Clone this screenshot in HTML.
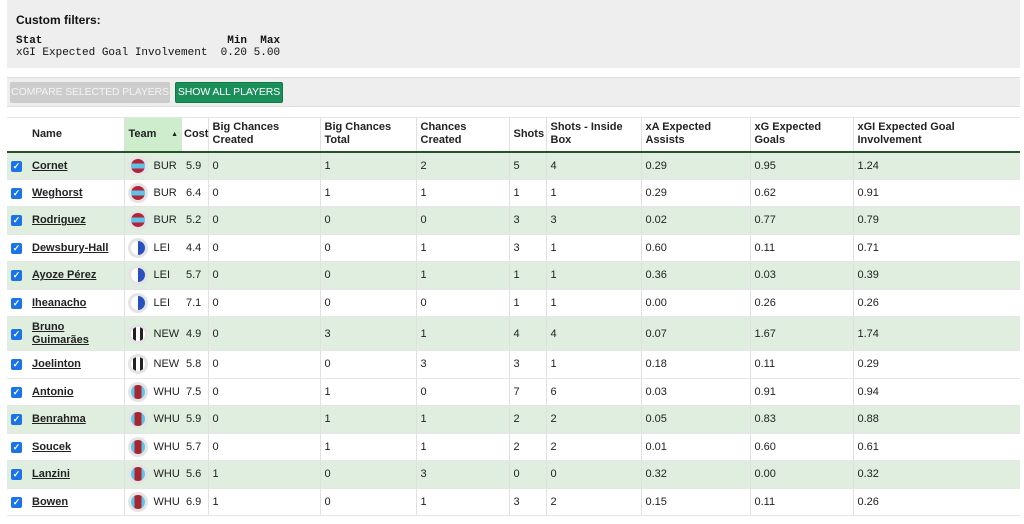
<!DOCTYPE html>
<html><head><meta charset="utf-8"><style>
*{box-sizing:border-box;margin:0;padding:0}
body{width:1024px;height:524px;background:#fff;font-family:"Liberation Sans",sans-serif;font-size:11px;color:#222;position:relative;overflow:hidden}
.top{position:absolute;left:7px;top:0;width:1013px;height:68px;background:#eee}
.top h3{position:absolute;left:9px;top:13px;font-size:12px;font-weight:bold;color:#111}
.top pre{position:absolute;left:9px;top:35px;font-family:"Liberation Mono",monospace;font-size:11px;line-height:12px;color:#111}
.bar{position:absolute;left:7px;top:77px;width:1013px;height:30px;background:#eee;border-top:1px solid #ddd;border-bottom:1px solid #ddd}
.btn{position:absolute;top:4px;height:21px;line-height:21px;font-size:10.5px;border-radius:2px;color:#fff;white-space:nowrap;text-align:center;overflow:hidden}
.b1{left:3px;width:160px;background:#ccc;color:#f4f4f4;letter-spacing:-0.15px}
.b2{left:168px;width:108px;background:#1a8f5a;border:1px solid #0d7a46;line-height:19px;letter-spacing:-0.1px}
table{position:absolute;left:7px;top:117px;border-collapse:collapse;table-layout:fixed;width:1013px}
th,td{text-align:left;padding:0 4px;border-left:1px solid #e0e0e0;vertical-align:middle;white-space:nowrap}
th{height:34px;font-weight:bold;font-size:11px;line-height:13px;border-top:1px solid #e6e6e6;border-bottom:2px solid #24532a;white-space:normal}
td{height:27.5px;border-bottom:1px solid #e6e6e6}
tr.g td{background:#dfeede}
th.team{background:#cdedcd}
td.c,th.c{border-left:none}
td.t{padding:0 2px 0 3px}
a{color:#222;font-weight:bold;text-decoration:underline}
.cb{display:inline-block;width:11px;height:11px;background:#1a73e8;border-radius:2px;color:#fff;font-size:9px;line-height:11px;text-align:center;font-weight:bold}
.ic{display:inline-block;width:20px;height:20px;border-radius:50%;background:#e4e4e4;vertical-align:middle;position:relative;margin-right:6px}
.ic i{position:absolute;left:3px;top:3px;width:14px;height:14px;border-radius:50%;overflow:hidden}
.bur i{background:linear-gradient(#b3243a 0 32%,#5ec4e6 32% 68%,#b3243a 68%)}
.lei i{background:linear-gradient(90deg,#fff 50%,#2a4fbf 50%)}
.new i{background:linear-gradient(90deg,#fff 0 15%,#222 15% 35%,#fff 35% 65%,#222 65% 85%,#fff 85%)}
.whu i{background:linear-gradient(90deg,#5ec4e6 0 25%,#a8242e 25% 75%,#5ec4e6 75%)}
</style></head><body>
<div class="top"><h3>Custom filters:</h3><pre><b>Stat                            Min  Max</b>
xGI Expected Goal Involvement  0.20 5.00</pre></div>
<div class="bar"><span class="btn b1">COMPARE SELECTED PLAYERS</span><span class="btn b2">SHOW ALL PLAYERS</span></div>
<table>
<colgroup><col style="width:21px"><col style="width:96px"><col style="width:58px"><col style="width:26px"><col style="width:112px"><col style="width:96px"><col style="width:93px"><col style="width:37px"><col style="width:95px"><col style="width:109px"><col style="width:103px"><col style="width:167px"></colgroup>
<tr><th class="c" style="border-left:none"></th><th class="c">Name</th><th class="team">Team <span style="float:right;font-size:7px">▲</span></th><th class="c" style="padding:0 2px">Cost</th><th>Big Chances Created</th><th>Big Chances Total</th><th>Chances Created</th><th>Shots</th><th>Shots - Inside Box</th><th>xA Expected Assists</th><th>xG Expected Goals</th><th>xGI Expected Goal Involvement</th></tr>
<tr class="g"><td class="c"><span class="cb">✓</span></td><td class="c"><a>Cornet</a></td><td class="t"><span class="ic bur"><i></i></span>BUR</td><td class="c">5.9</td><td>0</td><td>1</td><td>2</td><td>5</td><td>4</td><td>0.29</td><td>0.95</td><td>1.24</td></tr>
<tr><td class="c"><span class="cb">✓</span></td><td class="c"><a>Weghorst</a></td><td class="t"><span class="ic bur"><i></i></span>BUR</td><td class="c">6.4</td><td>0</td><td>1</td><td>1</td><td>1</td><td>1</td><td>0.29</td><td>0.62</td><td>0.91</td></tr>
<tr class="g"><td class="c"><span class="cb">✓</span></td><td class="c"><a>Rodriguez</a></td><td class="t"><span class="ic bur"><i></i></span>BUR</td><td class="c">5.2</td><td>0</td><td>0</td><td>0</td><td>3</td><td>3</td><td>0.02</td><td>0.77</td><td>0.79</td></tr>
<tr><td class="c"><span class="cb">✓</span></td><td class="c"><a>Dewsbury-Hall</a></td><td class="t"><span class="ic lei"><i></i></span>LEI</td><td class="c">4.4</td><td>0</td><td>0</td><td>1</td><td>3</td><td>1</td><td>0.60</td><td>0.11</td><td>0.71</td></tr>
<tr class="g"><td class="c"><span class="cb">✓</span></td><td class="c"><a>Ayoze Pérez</a></td><td class="t"><span class="ic lei"><i></i></span>LEI</td><td class="c">5.7</td><td>0</td><td>0</td><td>1</td><td>1</td><td>1</td><td>0.36</td><td>0.03</td><td>0.39</td></tr>
<tr><td class="c"><span class="cb">✓</span></td><td class="c"><a>Iheanacho</a></td><td class="t"><span class="ic lei"><i></i></span>LEI</td><td class="c">7.1</td><td>0</td><td>0</td><td>0</td><td>1</td><td>1</td><td>0.00</td><td>0.26</td><td>0.26</td></tr>
<tr class="g"><td class="c" style="height:34px"><span class="cb">✓</span></td><td class="c" style="line-height:13px;white-space:normal"><a>Bruno Guimarães</a></td><td class="t"><span class="ic new"><i></i></span>NEW</td><td class="c">4.9</td><td>0</td><td>3</td><td>1</td><td>4</td><td>4</td><td>0.07</td><td>1.67</td><td>1.74</td></tr>
<tr><td class="c"><span class="cb">✓</span></td><td class="c"><a>Joelinton</a></td><td class="t"><span class="ic new"><i></i></span>NEW</td><td class="c">5.8</td><td>0</td><td>0</td><td>3</td><td>3</td><td>1</td><td>0.18</td><td>0.11</td><td>0.29</td></tr>
<tr><td class="c"><span class="cb">✓</span></td><td class="c"><a>Antonio</a></td><td class="t"><span class="ic whu"><i></i></span>WHU</td><td class="c">7.5</td><td>0</td><td>1</td><td>0</td><td>7</td><td>6</td><td>0.03</td><td>0.91</td><td>0.94</td></tr>
<tr class="g"><td class="c"><span class="cb">✓</span></td><td class="c"><a>Benrahma</a></td><td class="t"><span class="ic whu"><i></i></span>WHU</td><td class="c">5.9</td><td>0</td><td>1</td><td>1</td><td>2</td><td>2</td><td>0.05</td><td>0.83</td><td>0.88</td></tr>
<tr><td class="c"><span class="cb">✓</span></td><td class="c"><a>Soucek</a></td><td class="t"><span class="ic whu"><i></i></span>WHU</td><td class="c">5.7</td><td>0</td><td>1</td><td>1</td><td>2</td><td>2</td><td>0.01</td><td>0.60</td><td>0.61</td></tr>
<tr class="g"><td class="c"><span class="cb">✓</span></td><td class="c"><a>Lanzini</a></td><td class="t"><span class="ic whu"><i></i></span>WHU</td><td class="c">5.6</td><td>1</td><td>0</td><td>3</td><td>0</td><td>0</td><td>0.32</td><td>0.00</td><td>0.32</td></tr>
<tr><td class="c"><span class="cb">✓</span></td><td class="c"><a>Bowen</a></td><td class="t"><span class="ic whu"><i></i></span>WHU</td><td class="c">6.9</td><td>1</td><td>0</td><td>1</td><td>3</td><td>2</td><td>0.15</td><td>0.11</td><td>0.26</td></tr>
</table>
</body></html>
